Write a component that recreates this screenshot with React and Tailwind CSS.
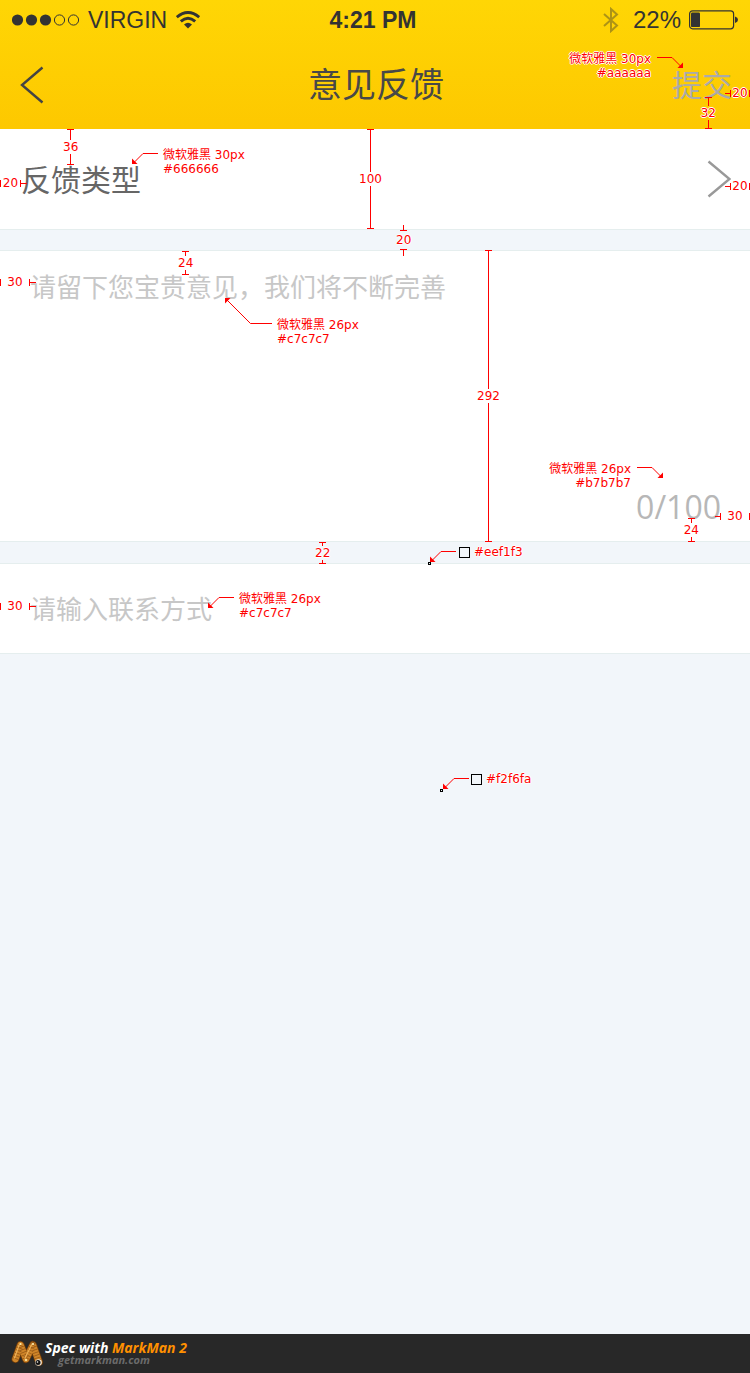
import React from "react";

const noteText =
  "font-['DejaVu_Sans','Noto_Sans_CJK_SC',sans-serif] font-normal text-[12px] leading-[14px] text-[#f00] whitespace-nowrap [text-shadow:1px_0_#fff,-1px_0_#fff,0_1px_#fff,0_-1px_#fff]";

function VMeasure({ value, outside, className }) {
  return (
    <div className={`absolute z-10 flex flex-col items-center pointer-events-none ${noteText} ${className}`}>
      {outside && <i className="w-px h-[5px] bg-[#f00]" />}
      <i className="w-[7px] h-px bg-[#f00]" />
      {!outside && <i className="w-px flex-1 bg-[#f00]" />}
      <span className={outside ? "py-[2px]" : ""}>{value}</span>
      {!outside && <i className="w-px flex-1 bg-[#f00]" />}
      <i className="w-[7px] h-px bg-[#f00]" />
      {outside && <i className="w-px h-[6px] bg-[#f00]" />}
    </div>
  );
}

function HMeasure({ value, side, className }) {
  return (
    <div className={`absolute z-10 flex items-center pointer-events-none ${noteText} ${className}`}>
      {side === "right" && <i className="w-[5px] h-px bg-[#f00]" />}
      <i className="w-px h-[7px] bg-[#f00]" />
      <span className="flex-1 text-center">{value}</span>
      <i className="w-px h-[7px] bg-[#f00]" />
      {side === "left" && <i className="w-[6px] h-px bg-[#f00]" />}
    </div>
  );
}

function Leader({ className }) {
  return (
    <svg aria-hidden="true" viewBox="0 0 26 12" className={`absolute z-10 w-[26px] h-[12px] pointer-events-none ${className}`}>
      <path d="M26 .5H11L1.5 10" fill="none" stroke="#f00" />
      <path d="M0 11V5.5L5.5 11Z" fill="#f00" />
    </svg>
  );
}

function Note({ lines, className }) {
  return (
    <div className={`absolute z-10 pointer-events-none ${noteText} ${className}`}>
      {lines.map((line) => (
        <div key={line}>{line}</div>
      ))}
    </div>
  );
}

function Swatch({ color, className }) {
  return (
    <div className={`absolute z-10 flex items-center gap-1 pointer-events-none ${noteText} ${className}`}>
      <i className="w-[11px] h-[11px] border border-black" />
      <span>{color}</span>
    </div>
  );
}

function StatusBar() {
  return (
    <div className="grid grid-cols-3 items-center h-10 px-3 text-[#333] font-['Liberation_Sans',sans-serif] font-normal text-[23px] leading-[26px]">
      <div className="flex items-center">
        <svg aria-hidden="true" viewBox="0 0 68 12" className="w-[68px] h-3 mr-2">
          <g fill="#333">
            <circle cx="5.5" cy="6" r="5.6" />
            <circle cx="19.5" cy="6" r="5.6" />
            <circle cx="33.5" cy="6" r="5.6" />
          </g>
          <g fill="none" stroke="#333">
            <circle cx="47.5" cy="6" r="5.1" />
            <circle cx="61.5" cy="6" r="5.1" />
          </g>
        </svg>
        <span>VIRGIN</span>
        <svg aria-hidden="true" viewBox="0 0 24 18" className="w-6 h-[18px] ml-[9px]">
          <g fill="none" stroke="#333" strokeWidth="2.9">
            <path d="M.8 6.2Q12-3.2 23.2 6.2" />
            <path d="M4.8 10.4Q12 4.2 19.2 10.4" />
          </g>
          <path d="M8 13.4Q12 10 16 13.4L12 17.6Z" fill="#333" />
        </svg>
      </div>
      <div className="pr-1 text-center font-bold">4:21 PM</div>
      <div className="flex items-center justify-end">
        <svg aria-hidden="true" viewBox="0 0 16 26" className="w-4 h-[26px] mr-[14px]">
          <path d="M1 7L14 18.5L8 24V2L14 7.5L1 19" fill="none" stroke="#333" strokeOpacity=".4" strokeWidth="2" />
        </svg>
        <span className="text-[24px]">22%</span>
        <svg aria-hidden="true" viewBox="0 0 49 20" className="w-[49px] h-5 ml-2">
          <rect x=".6" y=".8" width="44" height="18" rx="3" fill="none" stroke="#333" strokeWidth="1.2" />
          <rect x="2" y="2.5" width="9" height="14.6" rx="1.2" fill="#333" />
          <path d="M46 6.5Q49 7.5 49 9.8T46 13Z" fill="#333" />
        </svg>
      </div>
    </div>
  );
}

function WormLogo() {
  return (
    <svg aria-hidden="true" viewBox="0 0 32 28" className="w-8 h-7">
      <g fill="none" strokeLinecap="round" strokeLinejoin="round">
        <path d="M4.5 19L9.5 5L15 19L22 5L28 22" stroke="#6e3b0a" strokeWidth="8" />
        <path d="M4.5 19L9.5 5L15 19L22 5L28 22" stroke="#cf8529" strokeWidth="6.4" />
        <path d="M4.5 19L9.5 5L15 19L22 5L28 22" stroke="#9a5b18" strokeWidth="6.4" strokeLinecap="butt" strokeDasharray=".8 2" />
        <path d="M3.5 18L8.5 4M14 18L21 4" stroke="#efb35b" strokeWidth="1.2" strokeDasharray="2 1" />
      </g>
      <circle cx="9.5" cy="4" r="1.1" fill="#fff0b0" />
      <circle cx="22" cy="4" r="1.1" fill="#fff0b0" />
      <circle cx="15" cy="20" r="1.1" fill="#fff0b0" />
      <circle cx="27.5" cy="22.5" r="3.3" fill="#e9e2d6" />
      <circle cx="27" cy="22.5" r="2.5" fill="#111" />
      <circle cx="26.5" cy="22" r=".8" fill="#fff" />
    </svg>
  );
}

export default function App() {
  return (
    <div className="relative flex flex-col min-h-screen bg-[#f2f6fa] font-['Noto_Sans_CJK_SC',sans-serif] font-normal">
      <header className="relative bg-linear-to-b from-[#ffd605] to-[#fdc800]">
        <StatusBar />
        <div className="flex items-center justify-between h-[89px] pl-5 pr-[18px]">
          <button type="button" aria-label="返回" className="w-[60px]">
            <svg aria-hidden="true" viewBox="0 0 24 38" className="w-6 h-[38px]">
              <path d="M22.5 1.5L2 19L22.5 36.5" fill="none" stroke="#444" strokeWidth="2.4" />
            </svg>
          </button>
          <h1 className="pb-1 text-[34px] leading-[44px] text-[#484848]">意见反馈</h1>
          <button type="button" className="pb-1 text-[30px] leading-[40px] text-[#aaa]">提交</button>
        </div>
        <Note lines={["微软雅黑 30px", "#aaaaaa"]} className="right-[99px] top-[52px] text-right" />
        <Leader className="right-[67px] top-[57px] -scale-x-100" />
        <HMeasure value="20" side="right" className="right-0 top-[86px] w-[25px]" />
        <VMeasure value="32" className="right-[34px] bottom-0 h-8" />
      </header>

      <main className="flex-1">
        <div className="relative">
          <button type="button" className="flex w-full items-center justify-between h-[101px] pl-[21px] pr-[19px] bg-white border-b border-[#e5eeee]">
            <span className="pb-[2px] text-[30px] leading-[40px] text-[#666]">反馈类型</span>
            <svg aria-hidden="true" viewBox="0 0 24 38" className="w-6 h-[38px]">
              <path d="M1.5 1.5L22.5 19L1.5 36.5" fill="none" stroke="#999" strokeWidth="2.4" />
            </svg>
          </button>
          <VMeasure value="36" className="left-[63px] top-0 h-9" />
          <Leader className="left-[132px] top-[24px]" />
          <Note lines={["微软雅黑 30px", "#666666"]} className="left-[163px] top-[19px]" />
          <HMeasure value="20" side="left" className="left-0 top-[47px] w-[27px]" />
          <VMeasure value="100" className="left-[359px] top-0 h-[100px]" />
          <HMeasure value="20" side="right" className="right-0 top-[50px] w-[25px]" />
          <VMeasure value="20" outside className="left-[396px] top-[96px]" />
        </div>

        <div className="relative flex flex-col mt-5 h-[292px] bg-white border-y border-[#e5eeee]">
          <textarea
            aria-label="意见"
            maxLength={100}
            placeholder="请留下您宝贵意见，我们将不断完善"
            className="block flex-1 w-full resize-none outline-none px-[30px] pt-[17px] text-[26px] leading-[36px] text-[#666] placeholder:text-[#c7c7c7]"
          />
          <div className="self-end pr-[29px] pb-[14px] font-['Open_Sans',sans-serif] text-[32px] leading-[40px] text-[#b7b7b7]">0/100</div>
          <VMeasure value="24" className="left-[178px] top-0 h-6" />
          <HMeasure value="30" side="left" className="left-0 top-[24px] w-9" />
          <svg aria-hidden="true" viewBox="0 0 47 27" className="absolute z-10 left-[225px] top-[46px] w-[47px] h-[27px] pointer-events-none">
            <path d="M47 26.5H25.5L2 3" fill="none" stroke="#f00" />
            <path d="M0 1H5.5L0 6.5Z" fill="#f00" />
          </svg>
          <Note lines={["微软雅黑 26px", "#c7c7c7"]} className="left-[277px] top-[67px]" />
          <VMeasure value="292" className="left-[477px] -top-px h-[292px]" />
          <Note lines={["微软雅黑 26px", "#b7b7b7"]} className="right-[119px] top-[211px] text-right" />
          <Leader className="right-[87px] top-[216px] -scale-x-100" />
          <HMeasure value="30" side="right" className="right-0 top-[258px] w-[35px]" />
          <VMeasure value="24" className="right-[51px] -bottom-px h-6" />
        </div>

        <div className="relative mt-[21px] border-y border-[#e5eeee] bg-white">
          <input
            type="text"
            aria-label="联系方式"
            placeholder="请输入联系方式"
            className="block w-full h-[89px] outline-none px-[30px] pb-[3px] text-[26px] leading-[36px] text-[#666] placeholder:text-[#c7c7c7]"
          />
          <VMeasure value="22" className="left-[315px] -top-[22px] h-[22px]" />
          <Leader className="left-[430px] -top-[13px]" />
          <i className="absolute z-10 left-[428px] -top-[2px] w-[3px] h-[3px] border border-black" />
          <Swatch color="#eef1f3" className="left-[459px] -top-[19px]" />
          <HMeasure value="30" side="left" className="left-0 top-[35px] w-9" />
          <Leader className="left-[208px] top-[33px]" />
          <Note lines={["微软雅黑 26px", "#c7c7c7"]} className="left-[239px] top-[28px]" />
        </div>

        <div className="relative">
          <Leader className="left-[443px] top-[124px]" />
          <i className="absolute left-[440px] top-[135px] w-[3px] h-[3px] border border-black" />
          <Swatch color="#f2f6fa" className="left-[471px] top-[118px]" />
        </div>
      </main>

      <footer className="flex items-center h-[39px] pl-[11px] gap-[2px] bg-[#282828] font-['Open_Sans',sans-serif] font-bold italic">
        <WormLogo />
        <div>
          <div className="text-[14px] leading-[13px] text-white">
            Spec with <span className="text-[#ff9000]">MarkMan 2</span>
          </div>
          <a href="#getmarkman" className="block pl-[13px] text-[11px] leading-[12px] text-[#6b6b6b]">getmarkman.com</a>
        </div>
      </footer>
    </div>
  );
}
